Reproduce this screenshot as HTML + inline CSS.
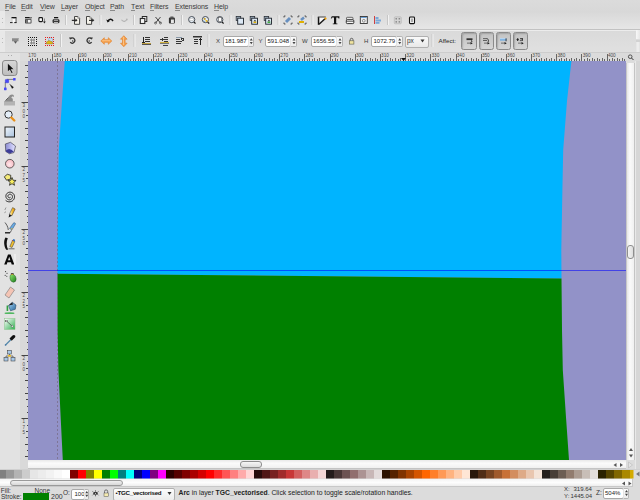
<!DOCTYPE html><html><head><meta charset="utf-8"><style>

*{box-sizing:border-box}
html,body{margin:0;padding:0}
body{width:640px;height:500px;overflow:hidden;position:relative;background:#dcdcdc;font-family:"Liberation Sans",sans-serif;color:#1a1a1a}
.ab{position:absolute}
.t{position:absolute;white-space:nowrap;font-size:8px;line-height:10px;color:#222}
.mn{position:absolute;white-space:nowrap;font-size:7px;line-height:11px;color:#3a3a3a;letter-spacing:-0.1px}
.mn u{text-decoration:none;display:inline-block;line-height:6.5px;border-bottom:1px solid #8a8a8a;}
svg{position:absolute;overflow:visible}
.rl{position:absolute;font-size:4.7px;line-height:5px;color:#4a4a4a;letter-spacing:0}

</style></head><body>
<div class="ab" style="left:0;top:0;width:640px;height:29px;background:linear-gradient(#dbdbdb,#d8d8d8 40%,#e6e6e6)"></div>
<div class="ab" style="left:0;top:29px;width:640px;height:1px;background:#c2c2c2"></div>
<div class="ab" style="left:0;top:30px;width:640px;height:1px;background:#ececec"></div>
<div class="ab" style="left:0;top:31px;width:640px;height:21px;background:linear-gradient(#dadada,#e0e0e0)"></div>
<div class="ab" style="left:0;top:52px;width:640px;height:1px;background:#cdcdcd"></div>
<div class="ab" style="left:0;top:11px;width:5px;height:18px;background:#e8e8e8"></div>
<div class="ab" style="left:0;top:31px;width:5px;height:21px;background:#e8e8e8"></div>
<div class="ab" style="left:636px;top:30px;width:4px;height:9px;background:linear-gradient(90deg,#f8f8f8,#e6e6e6)"></div><div class="ab" style="left:636px;top:40px;width:4px;height:1.5px;background:#d2d2d2"></div><div class="ab" style="left:636px;top:42px;width:4px;height:10px;background:linear-gradient(90deg,#e4e4e4,#f0f0f0 50%,#e0e0e0)"></div>
<div class="ab" style="left:0;top:53px;width:20px;height:416px;background:#e2e2e2"></div>
<div class="ab" style="left:20px;top:61px;width:8px;height:408px;background:#d9d9d9"></div>
<div class="ab" style="left:28px;top:53px;width:612px;height:8px;background:#dbdbdb"></div>
<span class="mn" style="left:5px;top:0.5px"><u>F</u>ile</span>
<span class="mn" style="left:21px;top:0.5px"><u>E</u>dit</span>
<span class="mn" style="left:40px;top:0.5px"><u>V</u>iew</span>
<span class="mn" style="left:61px;top:0.5px"><u>L</u>ayer</span>
<span class="mn" style="left:85px;top:0.5px"><u>O</u>bject</span>
<span class="mn" style="left:110px;top:0.5px"><u>P</u>ath</span>
<span class="mn" style="left:131px;top:0.5px"><u>T</u>ext</span>
<span class="mn" style="left:150px;top:0.5px"><u>F</u>ilters</span>
<span class="mn" style="left:175px;top:0.5px"><u>E</u>xtensions</span>
<span class="mn" style="left:214px;top:0.5px"><u>H</u>elp</span>
<svg style="left:28px;top:61px" width="598" height="399" viewBox="28 61 598 399">
<rect x="28" y="61" width="598" height="399" fill="#9292c8"/>
<path d="M64.80,61.00 L62.00,101.00 L58.80,150.00 L58.00,190.00 L57.60,230.00 L57.50,272.00 L57.50,273.75 L561.50,278.40 L561.50,278.00 L561.30,250.00 L562.40,190.00 L563.20,150.00 L567.00,101.00 L571.40,61.00 Z" fill="#00b4ff"/>
<path d="M57.50,273.75 L57.60,330.00 L58.40,370.00 L60.80,420.00 L62.80,460.00 L569.00,460.00 L566.20,420.00 L562.80,370.00 L562.00,330.00 L561.50,278.40 Z" fill="#008000"/>
<line x1="57.5" y1="61" x2="57.5" y2="460" stroke="#6e5e70" stroke-width="1" stroke-dasharray="2,2" opacity="0.55"/>
<rect x="28" y="270" width="598" height="1" fill="rgba(0,0,255,0.55)"/>
</svg>
<svg style="left:0;top:0" width="640" height="500">
<line x1="30.5" y1="59" x2="30.5" y2="61" stroke="#666" stroke-width="1"/>
<line x1="32.5" y1="58" x2="32.5" y2="61" stroke="#666" stroke-width="1"/>
<line x1="35.5" y1="59" x2="35.5" y2="61" stroke="#666" stroke-width="1"/>
<line x1="37.5" y1="58" x2="37.5" y2="61" stroke="#666" stroke-width="1"/>
<line x1="40.5" y1="59" x2="40.5" y2="61" stroke="#666" stroke-width="1"/>
<line x1="42.5" y1="58" x2="42.5" y2="61" stroke="#666" stroke-width="1"/>
<line x1="45.5" y1="59" x2="45.5" y2="61" stroke="#666" stroke-width="1"/>
<line x1="47.5" y1="58" x2="47.5" y2="61" stroke="#666" stroke-width="1"/>
<line x1="50.5" y1="59" x2="50.5" y2="61" stroke="#666" stroke-width="1"/>
<line x1="52.5" y1="54" x2="52.5" y2="61" stroke="#666" stroke-width="1"/>
<line x1="55.5" y1="59" x2="55.5" y2="61" stroke="#666" stroke-width="1"/>
<line x1="57.5" y1="58" x2="57.5" y2="61" stroke="#666" stroke-width="1"/>
<line x1="60.5" y1="59" x2="60.5" y2="61" stroke="#666" stroke-width="1"/>
<line x1="62.5" y1="58" x2="62.5" y2="61" stroke="#666" stroke-width="1"/>
<line x1="65.5" y1="59" x2="65.5" y2="61" stroke="#666" stroke-width="1"/>
<line x1="67.5" y1="58" x2="67.5" y2="61" stroke="#666" stroke-width="1"/>
<line x1="70.5" y1="59" x2="70.5" y2="61" stroke="#666" stroke-width="1"/>
<line x1="72.5" y1="58" x2="72.5" y2="61" stroke="#666" stroke-width="1"/>
<line x1="75.5" y1="59" x2="75.5" y2="61" stroke="#666" stroke-width="1"/>
<line x1="78.5" y1="54" x2="78.5" y2="61" stroke="#666" stroke-width="1"/>
<line x1="80.5" y1="59" x2="80.5" y2="61" stroke="#666" stroke-width="1"/>
<line x1="83.5" y1="58" x2="83.5" y2="61" stroke="#666" stroke-width="1"/>
<line x1="85.5" y1="59" x2="85.5" y2="61" stroke="#666" stroke-width="1"/>
<line x1="88.5" y1="58" x2="88.5" y2="61" stroke="#666" stroke-width="1"/>
<line x1="90.5" y1="59" x2="90.5" y2="61" stroke="#666" stroke-width="1"/>
<line x1="93.5" y1="58" x2="93.5" y2="61" stroke="#666" stroke-width="1"/>
<line x1="95.5" y1="59" x2="95.5" y2="61" stroke="#666" stroke-width="1"/>
<line x1="98.5" y1="58" x2="98.5" y2="61" stroke="#666" stroke-width="1"/>
<line x1="100.5" y1="59" x2="100.5" y2="61" stroke="#666" stroke-width="1"/>
<line x1="103.5" y1="54" x2="103.5" y2="61" stroke="#666" stroke-width="1"/>
<line x1="105.5" y1="59" x2="105.5" y2="61" stroke="#666" stroke-width="1"/>
<line x1="108.5" y1="58" x2="108.5" y2="61" stroke="#666" stroke-width="1"/>
<line x1="110.5" y1="59" x2="110.5" y2="61" stroke="#666" stroke-width="1"/>
<line x1="113.5" y1="58" x2="113.5" y2="61" stroke="#666" stroke-width="1"/>
<line x1="115.5" y1="59" x2="115.5" y2="61" stroke="#666" stroke-width="1"/>
<line x1="118.5" y1="58" x2="118.5" y2="61" stroke="#666" stroke-width="1"/>
<line x1="120.5" y1="59" x2="120.5" y2="61" stroke="#666" stroke-width="1"/>
<line x1="123.5" y1="58" x2="123.5" y2="61" stroke="#666" stroke-width="1"/>
<line x1="125.5" y1="59" x2="125.5" y2="61" stroke="#666" stroke-width="1"/>
<line x1="128.5" y1="54" x2="128.5" y2="61" stroke="#666" stroke-width="1"/>
<line x1="130.5" y1="59" x2="130.5" y2="61" stroke="#666" stroke-width="1"/>
<line x1="133.5" y1="58" x2="133.5" y2="61" stroke="#666" stroke-width="1"/>
<line x1="135.5" y1="59" x2="135.5" y2="61" stroke="#666" stroke-width="1"/>
<line x1="138.5" y1="58" x2="138.5" y2="61" stroke="#666" stroke-width="1"/>
<line x1="140.5" y1="59" x2="140.5" y2="61" stroke="#666" stroke-width="1"/>
<line x1="143.5" y1="58" x2="143.5" y2="61" stroke="#666" stroke-width="1"/>
<line x1="146.5" y1="59" x2="146.5" y2="61" stroke="#666" stroke-width="1"/>
<line x1="148.5" y1="58" x2="148.5" y2="61" stroke="#666" stroke-width="1"/>
<line x1="151.5" y1="59" x2="151.5" y2="61" stroke="#666" stroke-width="1"/>
<line x1="153.5" y1="54" x2="153.5" y2="61" stroke="#666" stroke-width="1"/>
<line x1="156.5" y1="59" x2="156.5" y2="61" stroke="#666" stroke-width="1"/>
<line x1="158.5" y1="58" x2="158.5" y2="61" stroke="#666" stroke-width="1"/>
<line x1="161.5" y1="59" x2="161.5" y2="61" stroke="#666" stroke-width="1"/>
<line x1="163.5" y1="58" x2="163.5" y2="61" stroke="#666" stroke-width="1"/>
<line x1="166.5" y1="59" x2="166.5" y2="61" stroke="#666" stroke-width="1"/>
<line x1="168.5" y1="58" x2="168.5" y2="61" stroke="#666" stroke-width="1"/>
<line x1="171.5" y1="59" x2="171.5" y2="61" stroke="#666" stroke-width="1"/>
<line x1="173.5" y1="58" x2="173.5" y2="61" stroke="#666" stroke-width="1"/>
<line x1="176.5" y1="59" x2="176.5" y2="61" stroke="#666" stroke-width="1"/>
<line x1="178.5" y1="54" x2="178.5" y2="61" stroke="#666" stroke-width="1"/>
<line x1="181.5" y1="59" x2="181.5" y2="61" stroke="#666" stroke-width="1"/>
<line x1="183.5" y1="58" x2="183.5" y2="61" stroke="#666" stroke-width="1"/>
<line x1="186.5" y1="59" x2="186.5" y2="61" stroke="#666" stroke-width="1"/>
<line x1="188.5" y1="58" x2="188.5" y2="61" stroke="#666" stroke-width="1"/>
<line x1="191.5" y1="59" x2="191.5" y2="61" stroke="#666" stroke-width="1"/>
<line x1="193.5" y1="58" x2="193.5" y2="61" stroke="#666" stroke-width="1"/>
<line x1="196.5" y1="59" x2="196.5" y2="61" stroke="#666" stroke-width="1"/>
<line x1="198.5" y1="58" x2="198.5" y2="61" stroke="#666" stroke-width="1"/>
<line x1="201.5" y1="59" x2="201.5" y2="61" stroke="#666" stroke-width="1"/>
<line x1="204.5" y1="54" x2="204.5" y2="61" stroke="#666" stroke-width="1"/>
<line x1="206.5" y1="59" x2="206.5" y2="61" stroke="#666" stroke-width="1"/>
<line x1="209.5" y1="58" x2="209.5" y2="61" stroke="#666" stroke-width="1"/>
<line x1="211.5" y1="59" x2="211.5" y2="61" stroke="#666" stroke-width="1"/>
<line x1="214.5" y1="58" x2="214.5" y2="61" stroke="#666" stroke-width="1"/>
<line x1="216.5" y1="59" x2="216.5" y2="61" stroke="#666" stroke-width="1"/>
<line x1="219.5" y1="58" x2="219.5" y2="61" stroke="#666" stroke-width="1"/>
<line x1="221.5" y1="59" x2="221.5" y2="61" stroke="#666" stroke-width="1"/>
<line x1="224.5" y1="58" x2="224.5" y2="61" stroke="#666" stroke-width="1"/>
<line x1="226.5" y1="59" x2="226.5" y2="61" stroke="#666" stroke-width="1"/>
<line x1="229.5" y1="54" x2="229.5" y2="61" stroke="#666" stroke-width="1"/>
<line x1="231.5" y1="59" x2="231.5" y2="61" stroke="#666" stroke-width="1"/>
<line x1="234.5" y1="58" x2="234.5" y2="61" stroke="#666" stroke-width="1"/>
<line x1="236.5" y1="59" x2="236.5" y2="61" stroke="#666" stroke-width="1"/>
<line x1="239.5" y1="58" x2="239.5" y2="61" stroke="#666" stroke-width="1"/>
<line x1="241.5" y1="59" x2="241.5" y2="61" stroke="#666" stroke-width="1"/>
<line x1="244.5" y1="58" x2="244.5" y2="61" stroke="#666" stroke-width="1"/>
<line x1="246.5" y1="59" x2="246.5" y2="61" stroke="#666" stroke-width="1"/>
<line x1="249.5" y1="58" x2="249.5" y2="61" stroke="#666" stroke-width="1"/>
<line x1="251.5" y1="59" x2="251.5" y2="61" stroke="#666" stroke-width="1"/>
<line x1="254.5" y1="54" x2="254.5" y2="61" stroke="#666" stroke-width="1"/>
<line x1="256.5" y1="59" x2="256.5" y2="61" stroke="#666" stroke-width="1"/>
<line x1="259.5" y1="58" x2="259.5" y2="61" stroke="#666" stroke-width="1"/>
<line x1="261.5" y1="59" x2="261.5" y2="61" stroke="#666" stroke-width="1"/>
<line x1="264.5" y1="58" x2="264.5" y2="61" stroke="#666" stroke-width="1"/>
<line x1="266.5" y1="59" x2="266.5" y2="61" stroke="#666" stroke-width="1"/>
<line x1="269.5" y1="58" x2="269.5" y2="61" stroke="#666" stroke-width="1"/>
<line x1="272.5" y1="59" x2="272.5" y2="61" stroke="#666" stroke-width="1"/>
<line x1="274.5" y1="58" x2="274.5" y2="61" stroke="#666" stroke-width="1"/>
<line x1="277.5" y1="59" x2="277.5" y2="61" stroke="#666" stroke-width="1"/>
<line x1="279.5" y1="54" x2="279.5" y2="61" stroke="#666" stroke-width="1"/>
<line x1="282.5" y1="59" x2="282.5" y2="61" stroke="#666" stroke-width="1"/>
<line x1="284.5" y1="58" x2="284.5" y2="61" stroke="#666" stroke-width="1"/>
<line x1="287.5" y1="59" x2="287.5" y2="61" stroke="#666" stroke-width="1"/>
<line x1="289.5" y1="58" x2="289.5" y2="61" stroke="#666" stroke-width="1"/>
<line x1="292.5" y1="59" x2="292.5" y2="61" stroke="#666" stroke-width="1"/>
<line x1="294.5" y1="58" x2="294.5" y2="61" stroke="#666" stroke-width="1"/>
<line x1="297.5" y1="59" x2="297.5" y2="61" stroke="#666" stroke-width="1"/>
<line x1="299.5" y1="58" x2="299.5" y2="61" stroke="#666" stroke-width="1"/>
<line x1="302.5" y1="59" x2="302.5" y2="61" stroke="#666" stroke-width="1"/>
<line x1="304.5" y1="54" x2="304.5" y2="61" stroke="#666" stroke-width="1"/>
<line x1="307.5" y1="59" x2="307.5" y2="61" stroke="#666" stroke-width="1"/>
<line x1="309.5" y1="58" x2="309.5" y2="61" stroke="#666" stroke-width="1"/>
<line x1="312.5" y1="59" x2="312.5" y2="61" stroke="#666" stroke-width="1"/>
<line x1="314.5" y1="58" x2="314.5" y2="61" stroke="#666" stroke-width="1"/>
<line x1="317.5" y1="59" x2="317.5" y2="61" stroke="#666" stroke-width="1"/>
<line x1="319.5" y1="58" x2="319.5" y2="61" stroke="#666" stroke-width="1"/>
<line x1="322.5" y1="59" x2="322.5" y2="61" stroke="#666" stroke-width="1"/>
<line x1="324.5" y1="58" x2="324.5" y2="61" stroke="#666" stroke-width="1"/>
<line x1="327.5" y1="59" x2="327.5" y2="61" stroke="#666" stroke-width="1"/>
<line x1="330.5" y1="54" x2="330.5" y2="61" stroke="#666" stroke-width="1"/>
<line x1="332.5" y1="59" x2="332.5" y2="61" stroke="#666" stroke-width="1"/>
<line x1="335.5" y1="58" x2="335.5" y2="61" stroke="#666" stroke-width="1"/>
<line x1="337.5" y1="59" x2="337.5" y2="61" stroke="#666" stroke-width="1"/>
<line x1="340.5" y1="58" x2="340.5" y2="61" stroke="#666" stroke-width="1"/>
<line x1="342.5" y1="59" x2="342.5" y2="61" stroke="#666" stroke-width="1"/>
<line x1="345.5" y1="58" x2="345.5" y2="61" stroke="#666" stroke-width="1"/>
<line x1="347.5" y1="59" x2="347.5" y2="61" stroke="#666" stroke-width="1"/>
<line x1="350.5" y1="58" x2="350.5" y2="61" stroke="#666" stroke-width="1"/>
<line x1="352.5" y1="59" x2="352.5" y2="61" stroke="#666" stroke-width="1"/>
<line x1="355.5" y1="54" x2="355.5" y2="61" stroke="#666" stroke-width="1"/>
<line x1="357.5" y1="59" x2="357.5" y2="61" stroke="#666" stroke-width="1"/>
<line x1="360.5" y1="58" x2="360.5" y2="61" stroke="#666" stroke-width="1"/>
<line x1="362.5" y1="59" x2="362.5" y2="61" stroke="#666" stroke-width="1"/>
<line x1="365.5" y1="58" x2="365.5" y2="61" stroke="#666" stroke-width="1"/>
<line x1="367.5" y1="59" x2="367.5" y2="61" stroke="#666" stroke-width="1"/>
<line x1="370.5" y1="58" x2="370.5" y2="61" stroke="#666" stroke-width="1"/>
<line x1="372.5" y1="59" x2="372.5" y2="61" stroke="#666" stroke-width="1"/>
<line x1="375.5" y1="58" x2="375.5" y2="61" stroke="#666" stroke-width="1"/>
<line x1="377.5" y1="59" x2="377.5" y2="61" stroke="#666" stroke-width="1"/>
<line x1="380.5" y1="54" x2="380.5" y2="61" stroke="#666" stroke-width="1"/>
<line x1="382.5" y1="59" x2="382.5" y2="61" stroke="#666" stroke-width="1"/>
<line x1="385.5" y1="58" x2="385.5" y2="61" stroke="#666" stroke-width="1"/>
<line x1="387.5" y1="59" x2="387.5" y2="61" stroke="#666" stroke-width="1"/>
<line x1="390.5" y1="58" x2="390.5" y2="61" stroke="#666" stroke-width="1"/>
<line x1="392.5" y1="59" x2="392.5" y2="61" stroke="#666" stroke-width="1"/>
<line x1="395.5" y1="58" x2="395.5" y2="61" stroke="#666" stroke-width="1"/>
<line x1="398.5" y1="59" x2="398.5" y2="61" stroke="#666" stroke-width="1"/>
<line x1="400.5" y1="58" x2="400.5" y2="61" stroke="#666" stroke-width="1"/>
<line x1="403.5" y1="59" x2="403.5" y2="61" stroke="#666" stroke-width="1"/>
<line x1="405.5" y1="54" x2="405.5" y2="61" stroke="#666" stroke-width="1"/>
<line x1="408.5" y1="59" x2="408.5" y2="61" stroke="#666" stroke-width="1"/>
<line x1="410.5" y1="58" x2="410.5" y2="61" stroke="#666" stroke-width="1"/>
<line x1="413.5" y1="59" x2="413.5" y2="61" stroke="#666" stroke-width="1"/>
<line x1="415.5" y1="58" x2="415.5" y2="61" stroke="#666" stroke-width="1"/>
<line x1="418.5" y1="59" x2="418.5" y2="61" stroke="#666" stroke-width="1"/>
<line x1="420.5" y1="58" x2="420.5" y2="61" stroke="#666" stroke-width="1"/>
<line x1="423.5" y1="59" x2="423.5" y2="61" stroke="#666" stroke-width="1"/>
<line x1="425.5" y1="58" x2="425.5" y2="61" stroke="#666" stroke-width="1"/>
<line x1="428.5" y1="59" x2="428.5" y2="61" stroke="#666" stroke-width="1"/>
<line x1="430.5" y1="54" x2="430.5" y2="61" stroke="#666" stroke-width="1"/>
<line x1="433.5" y1="59" x2="433.5" y2="61" stroke="#666" stroke-width="1"/>
<line x1="435.5" y1="58" x2="435.5" y2="61" stroke="#666" stroke-width="1"/>
<line x1="438.5" y1="59" x2="438.5" y2="61" stroke="#666" stroke-width="1"/>
<line x1="440.5" y1="58" x2="440.5" y2="61" stroke="#666" stroke-width="1"/>
<line x1="443.5" y1="59" x2="443.5" y2="61" stroke="#666" stroke-width="1"/>
<line x1="445.5" y1="58" x2="445.5" y2="61" stroke="#666" stroke-width="1"/>
<line x1="448.5" y1="59" x2="448.5" y2="61" stroke="#666" stroke-width="1"/>
<line x1="450.5" y1="58" x2="450.5" y2="61" stroke="#666" stroke-width="1"/>
<line x1="453.5" y1="59" x2="453.5" y2="61" stroke="#666" stroke-width="1"/>
<line x1="456.5" y1="54" x2="456.5" y2="61" stroke="#666" stroke-width="1"/>
<line x1="458.5" y1="59" x2="458.5" y2="61" stroke="#666" stroke-width="1"/>
<line x1="461.5" y1="58" x2="461.5" y2="61" stroke="#666" stroke-width="1"/>
<line x1="463.5" y1="59" x2="463.5" y2="61" stroke="#666" stroke-width="1"/>
<line x1="466.5" y1="58" x2="466.5" y2="61" stroke="#666" stroke-width="1"/>
<line x1="468.5" y1="59" x2="468.5" y2="61" stroke="#666" stroke-width="1"/>
<line x1="471.5" y1="58" x2="471.5" y2="61" stroke="#666" stroke-width="1"/>
<line x1="473.5" y1="59" x2="473.5" y2="61" stroke="#666" stroke-width="1"/>
<line x1="476.5" y1="58" x2="476.5" y2="61" stroke="#666" stroke-width="1"/>
<line x1="478.5" y1="59" x2="478.5" y2="61" stroke="#666" stroke-width="1"/>
<line x1="481.5" y1="54" x2="481.5" y2="61" stroke="#666" stroke-width="1"/>
<line x1="483.5" y1="59" x2="483.5" y2="61" stroke="#666" stroke-width="1"/>
<line x1="486.5" y1="58" x2="486.5" y2="61" stroke="#666" stroke-width="1"/>
<line x1="488.5" y1="59" x2="488.5" y2="61" stroke="#666" stroke-width="1"/>
<line x1="491.5" y1="58" x2="491.5" y2="61" stroke="#666" stroke-width="1"/>
<line x1="493.5" y1="59" x2="493.5" y2="61" stroke="#666" stroke-width="1"/>
<line x1="496.5" y1="58" x2="496.5" y2="61" stroke="#666" stroke-width="1"/>
<line x1="498.5" y1="59" x2="498.5" y2="61" stroke="#666" stroke-width="1"/>
<line x1="501.5" y1="58" x2="501.5" y2="61" stroke="#666" stroke-width="1"/>
<line x1="503.5" y1="59" x2="503.5" y2="61" stroke="#666" stroke-width="1"/>
<line x1="506.5" y1="54" x2="506.5" y2="61" stroke="#666" stroke-width="1"/>
<line x1="508.5" y1="59" x2="508.5" y2="61" stroke="#666" stroke-width="1"/>
<line x1="511.5" y1="58" x2="511.5" y2="61" stroke="#666" stroke-width="1"/>
<line x1="513.5" y1="59" x2="513.5" y2="61" stroke="#666" stroke-width="1"/>
<line x1="516.5" y1="58" x2="516.5" y2="61" stroke="#666" stroke-width="1"/>
<line x1="518.5" y1="59" x2="518.5" y2="61" stroke="#666" stroke-width="1"/>
<line x1="521.5" y1="58" x2="521.5" y2="61" stroke="#666" stroke-width="1"/>
<line x1="524.5" y1="59" x2="524.5" y2="61" stroke="#666" stroke-width="1"/>
<line x1="526.5" y1="58" x2="526.5" y2="61" stroke="#666" stroke-width="1"/>
<line x1="529.5" y1="59" x2="529.5" y2="61" stroke="#666" stroke-width="1"/>
<line x1="531.5" y1="54" x2="531.5" y2="61" stroke="#666" stroke-width="1"/>
<line x1="534.5" y1="59" x2="534.5" y2="61" stroke="#666" stroke-width="1"/>
<line x1="536.5" y1="58" x2="536.5" y2="61" stroke="#666" stroke-width="1"/>
<line x1="539.5" y1="59" x2="539.5" y2="61" stroke="#666" stroke-width="1"/>
<line x1="541.5" y1="58" x2="541.5" y2="61" stroke="#666" stroke-width="1"/>
<line x1="544.5" y1="59" x2="544.5" y2="61" stroke="#666" stroke-width="1"/>
<line x1="546.5" y1="58" x2="546.5" y2="61" stroke="#666" stroke-width="1"/>
<line x1="549.5" y1="59" x2="549.5" y2="61" stroke="#666" stroke-width="1"/>
<line x1="551.5" y1="58" x2="551.5" y2="61" stroke="#666" stroke-width="1"/>
<line x1="554.5" y1="59" x2="554.5" y2="61" stroke="#666" stroke-width="1"/>
<line x1="556.5" y1="54" x2="556.5" y2="61" stroke="#666" stroke-width="1"/>
<line x1="559.5" y1="59" x2="559.5" y2="61" stroke="#666" stroke-width="1"/>
<line x1="561.5" y1="58" x2="561.5" y2="61" stroke="#666" stroke-width="1"/>
<line x1="564.5" y1="59" x2="564.5" y2="61" stroke="#666" stroke-width="1"/>
<line x1="566.5" y1="58" x2="566.5" y2="61" stroke="#666" stroke-width="1"/>
<line x1="569.5" y1="59" x2="569.5" y2="61" stroke="#666" stroke-width="1"/>
<line x1="571.5" y1="58" x2="571.5" y2="61" stroke="#666" stroke-width="1"/>
<line x1="574.5" y1="59" x2="574.5" y2="61" stroke="#666" stroke-width="1"/>
<line x1="576.5" y1="58" x2="576.5" y2="61" stroke="#666" stroke-width="1"/>
<line x1="579.5" y1="59" x2="579.5" y2="61" stroke="#666" stroke-width="1"/>
<line x1="581.5" y1="54" x2="581.5" y2="61" stroke="#666" stroke-width="1"/>
<line x1="584.5" y1="59" x2="584.5" y2="61" stroke="#666" stroke-width="1"/>
<line x1="587.5" y1="58" x2="587.5" y2="61" stroke="#666" stroke-width="1"/>
<line x1="589.5" y1="59" x2="589.5" y2="61" stroke="#666" stroke-width="1"/>
<line x1="592.5" y1="58" x2="592.5" y2="61" stroke="#666" stroke-width="1"/>
<line x1="594.5" y1="59" x2="594.5" y2="61" stroke="#666" stroke-width="1"/>
<line x1="597.5" y1="58" x2="597.5" y2="61" stroke="#666" stroke-width="1"/>
<line x1="599.5" y1="59" x2="599.5" y2="61" stroke="#666" stroke-width="1"/>
<line x1="602.5" y1="58" x2="602.5" y2="61" stroke="#666" stroke-width="1"/>
<line x1="604.5" y1="59" x2="604.5" y2="61" stroke="#666" stroke-width="1"/>
<line x1="607.5" y1="54" x2="607.5" y2="61" stroke="#666" stroke-width="1"/>
<line x1="609.5" y1="59" x2="609.5" y2="61" stroke="#666" stroke-width="1"/>
<line x1="612.5" y1="58" x2="612.5" y2="61" stroke="#666" stroke-width="1"/>
<line x1="614.5" y1="59" x2="614.5" y2="61" stroke="#666" stroke-width="1"/>
<line x1="617.5" y1="58" x2="617.5" y2="61" stroke="#666" stroke-width="1"/>
<line x1="619.5" y1="59" x2="619.5" y2="61" stroke="#666" stroke-width="1"/>
<line x1="622.5" y1="58" x2="622.5" y2="61" stroke="#666" stroke-width="1"/>
<line x1="624.5" y1="59" x2="624.5" y2="61" stroke="#666" stroke-width="1"/>
<line x1="25" y1="65.5" x2="28" y2="65.5" stroke="#444" stroke-width="1"/>
<line x1="27" y1="71.5" x2="28" y2="71.5" stroke="#444" stroke-width="1"/>
<line x1="25" y1="77.5" x2="28" y2="77.5" stroke="#444" stroke-width="1"/>
<line x1="26" y1="84.5" x2="28" y2="84.5" stroke="#444" stroke-width="1"/>
<line x1="27" y1="90.5" x2="28" y2="90.5" stroke="#444" stroke-width="1"/>
<line x1="27" y1="96.5" x2="28" y2="96.5" stroke="#444" stroke-width="1"/>
<line x1="21.5" y1="102.5" x2="28" y2="102.5" stroke="#444" stroke-width="1"/>
<line x1="27" y1="109.5" x2="28" y2="109.5" stroke="#444" stroke-width="1"/>
<line x1="26" y1="115.5" x2="28" y2="115.5" stroke="#444" stroke-width="1"/>
<line x1="26" y1="121.5" x2="28" y2="121.5" stroke="#444" stroke-width="1"/>
<line x1="25" y1="128.5" x2="28" y2="128.5" stroke="#444" stroke-width="1"/>
<line x1="27" y1="134.5" x2="28" y2="134.5" stroke="#444" stroke-width="1"/>
<line x1="25" y1="140.5" x2="28" y2="140.5" stroke="#444" stroke-width="1"/>
<line x1="26" y1="147.5" x2="28" y2="147.5" stroke="#444" stroke-width="1"/>
<line x1="27" y1="153.5" x2="28" y2="153.5" stroke="#444" stroke-width="1"/>
<line x1="27" y1="159.5" x2="28" y2="159.5" stroke="#444" stroke-width="1"/>
<line x1="21.5" y1="166.5" x2="28" y2="166.5" stroke="#444" stroke-width="1"/>
<line x1="27" y1="172.5" x2="28" y2="172.5" stroke="#444" stroke-width="1"/>
<line x1="26" y1="178.5" x2="28" y2="178.5" stroke="#444" stroke-width="1"/>
<line x1="26" y1="185.5" x2="28" y2="185.5" stroke="#444" stroke-width="1"/>
<line x1="25" y1="191.5" x2="28" y2="191.5" stroke="#444" stroke-width="1"/>
<line x1="27" y1="197.5" x2="28" y2="197.5" stroke="#444" stroke-width="1"/>
<line x1="25" y1="204.5" x2="28" y2="204.5" stroke="#444" stroke-width="1"/>
<line x1="26" y1="210.5" x2="28" y2="210.5" stroke="#444" stroke-width="1"/>
<line x1="27" y1="216.5" x2="28" y2="216.5" stroke="#444" stroke-width="1"/>
<line x1="27" y1="222.5" x2="28" y2="222.5" stroke="#444" stroke-width="1"/>
<line x1="21.5" y1="229.5" x2="28" y2="229.5" stroke="#444" stroke-width="1"/>
<line x1="27" y1="235.5" x2="28" y2="235.5" stroke="#444" stroke-width="1"/>
<line x1="26" y1="241.5" x2="28" y2="241.5" stroke="#444" stroke-width="1"/>
<line x1="26" y1="248.5" x2="28" y2="248.5" stroke="#444" stroke-width="1"/>
<line x1="25" y1="254.5" x2="28" y2="254.5" stroke="#444" stroke-width="1"/>
<line x1="27" y1="260.5" x2="28" y2="260.5" stroke="#444" stroke-width="1"/>
<line x1="25" y1="267.5" x2="28" y2="267.5" stroke="#444" stroke-width="1"/>
<line x1="26" y1="273.5" x2="28" y2="273.5" stroke="#444" stroke-width="1"/>
<line x1="27" y1="279.5" x2="28" y2="279.5" stroke="#444" stroke-width="1"/>
<line x1="27" y1="286.5" x2="28" y2="286.5" stroke="#444" stroke-width="1"/>
<line x1="21.5" y1="292.5" x2="28" y2="292.5" stroke="#444" stroke-width="1"/>
<line x1="27" y1="298.5" x2="28" y2="298.5" stroke="#444" stroke-width="1"/>
<line x1="26" y1="305.5" x2="28" y2="305.5" stroke="#444" stroke-width="1"/>
<line x1="26" y1="311.5" x2="28" y2="311.5" stroke="#444" stroke-width="1"/>
<line x1="25" y1="317.5" x2="28" y2="317.5" stroke="#444" stroke-width="1"/>
<line x1="27" y1="324.5" x2="28" y2="324.5" stroke="#444" stroke-width="1"/>
<line x1="25" y1="330.5" x2="28" y2="330.5" stroke="#444" stroke-width="1"/>
<line x1="26" y1="336.5" x2="28" y2="336.5" stroke="#444" stroke-width="1"/>
<line x1="27" y1="342.5" x2="28" y2="342.5" stroke="#444" stroke-width="1"/>
<line x1="27" y1="349.5" x2="28" y2="349.5" stroke="#444" stroke-width="1"/>
<line x1="21.5" y1="355.5" x2="28" y2="355.5" stroke="#444" stroke-width="1"/>
<line x1="27" y1="361.5" x2="28" y2="361.5" stroke="#444" stroke-width="1"/>
<line x1="26" y1="368.5" x2="28" y2="368.5" stroke="#444" stroke-width="1"/>
<line x1="26" y1="374.5" x2="28" y2="374.5" stroke="#444" stroke-width="1"/>
<line x1="25" y1="380.5" x2="28" y2="380.5" stroke="#444" stroke-width="1"/>
<line x1="27" y1="387.5" x2="28" y2="387.5" stroke="#444" stroke-width="1"/>
<line x1="25" y1="393.5" x2="28" y2="393.5" stroke="#444" stroke-width="1"/>
<line x1="26" y1="399.5" x2="28" y2="399.5" stroke="#444" stroke-width="1"/>
<line x1="27" y1="406.5" x2="28" y2="406.5" stroke="#444" stroke-width="1"/>
<line x1="27" y1="412.5" x2="28" y2="412.5" stroke="#444" stroke-width="1"/>
<line x1="21.5" y1="418.5" x2="28" y2="418.5" stroke="#444" stroke-width="1"/>
<line x1="27" y1="425.5" x2="28" y2="425.5" stroke="#444" stroke-width="1"/>
<line x1="26" y1="431.5" x2="28" y2="431.5" stroke="#444" stroke-width="1"/>
<line x1="26" y1="437.5" x2="28" y2="437.5" stroke="#444" stroke-width="1"/>
<line x1="25" y1="444.5" x2="28" y2="444.5" stroke="#444" stroke-width="1"/>
<line x1="27" y1="450.5" x2="28" y2="450.5" stroke="#444" stroke-width="1"/>
<line x1="25" y1="456.5" x2="28" y2="456.5" stroke="#444" stroke-width="1"/>
</svg>
<span class="rl" style="left:28.3px;top:53px">170</span>
<span class="rl" style="left:53.5px;top:53px">180</span>
<span class="rl" style="left:78.7px;top:53px">190</span>
<span class="rl" style="left:103.9px;top:53px">200</span>
<span class="rl" style="left:129.1px;top:53px">210</span>
<span class="rl" style="left:154.3px;top:53px">220</span>
<span class="rl" style="left:179.5px;top:53px">230</span>
<span class="rl" style="left:204.7px;top:53px">240</span>
<span class="rl" style="left:229.9px;top:53px">250</span>
<span class="rl" style="left:255.1px;top:53px">260</span>
<span class="rl" style="left:280.3px;top:53px">270</span>
<span class="rl" style="left:305.5px;top:53px">280</span>
<span class="rl" style="left:330.7px;top:53px">290</span>
<span class="rl" style="left:355.9px;top:53px">300</span>
<span class="rl" style="left:381.1px;top:53px">310</span>
<span class="rl" style="left:406.3px;top:53px">320</span>
<span class="rl" style="left:431.5px;top:53px">330</span>
<span class="rl" style="left:456.7px;top:53px">340</span>
<span class="rl" style="left:481.9px;top:53px">350</span>
<span class="rl" style="left:507.1px;top:53px">360</span>
<span class="rl" style="left:532.3px;top:53px">370</span>
<span class="rl" style="left:557.5px;top:53px">380</span>
<span class="rl" style="left:582.7px;top:53px">390</span>
<span class="rl" style="left:607.9px;top:53px">400</span>
<span class="rl" style="left:21.3px;top:103.3px;writing-mode:vertical-lr;text-orientation:upright;font-size:4.5px;line-height:4px;letter-spacing:0.6px">300</span>
<span class="rl" style="left:21.3px;top:166.5px;writing-mode:vertical-lr;text-orientation:upright;font-size:4.5px;line-height:4px;letter-spacing:0.6px">275</span>
<span class="rl" style="left:21.3px;top:229.6px;writing-mode:vertical-lr;text-orientation:upright;font-size:4.5px;line-height:4px;letter-spacing:0.6px">250</span>
<span class="rl" style="left:21.3px;top:292.8px;writing-mode:vertical-lr;text-orientation:upright;font-size:4.5px;line-height:4px;letter-spacing:0.6px">225</span>
<span class="rl" style="left:21.3px;top:355.9px;writing-mode:vertical-lr;text-orientation:upright;font-size:4.5px;line-height:4px;letter-spacing:0.6px">200</span>
<span class="rl" style="left:21.3px;top:419.1px;writing-mode:vertical-lr;text-orientation:upright;font-size:4.5px;line-height:4px;letter-spacing:0.6px">175</span>
<svg style="left:0;top:0" width="640" height="500">
<g><rect x="12" y="17.5" width="4" height="5" fill="#fafafa"/><rect x="11.5" y="17" width="5" height="1.4" fill="#111"/><rect x="15.5" y="18" width="1.1" height="5" fill="#666"/><rect x="11.6" y="18" width="0.9" height="4" fill="#c4c4c4"/><rect x="10" y="22" width="2.6" height="1.1" fill="#333"/><rect x="14.3" y="22" width="2.2" height="1.1" fill="#222"/><rect x="25" y="17" width="6.5" height="1.3" fill="#151515"/><rect x="29.5" y="17" width="2" height="1.3" fill="#777"/><rect x="25" y="19" width="6.5" height="4.5" rx="0.8" fill="#444"/><rect x="27.8" y="19.8" width="2.8" height="2.8" fill="#f4f4f4"/><rect x="26" y="19.5" width="1.5" height="3.5" fill="#777"/><rect x="38.9" y="17.6" width="3.6" height="4" rx="0.8" fill="#eee" stroke="#181818" stroke-width="1.1"/><rect x="39.8" y="18.8" width="1.6" height="1.6" fill="#fff"/><rect x="44" y="18.5" width="0.8" height="3.5" fill="#777"/><path d="M43,21.5h2.8l-1.4,2z" fill="#222"/><rect x="54" y="17" width="4.2" height="1.3" fill="#111"/><rect x="52.5" y="19" width="7" height="4.3" rx="1.5" fill="#3a3a3a"/><rect x="54" y="19.6" width="4" height="1.3" fill="#aaa"/><rect x="54" y="22" width="4" height="0.8" fill="#ddd"/><path d="M74.5,16.5h3.3l1.8,1.8v6h-5.1z" fill="#f4f2ea" stroke="#333" stroke-width="0.9"/><path d="M77.8,16.5v1.8h1.8" fill="#ddd" stroke="#555" stroke-width="0.5"/><rect x="71.8" y="19.8" width="4.5" height="1.1" fill="#222"/><path d="M75.5,18.6l2,1.75l-2,1.75z" fill="#222"/><path d="M86.5,16.5h3.3l1.8,1.8v6h-5.1z" fill="#f4f2ea" stroke="#333" stroke-width="0.9"/><path d="M89.8,16.5v1.8h1.8" fill="#ddd" stroke="#555" stroke-width="0.5"/><rect x="89" y="19.8" width="4" height="1.1" fill="#222"/><path d="M92.3,18.6l2,1.75l-2,1.75z" fill="#222"/><path d="M108,21.2C109,18.8 111.5,18.5 113,21" stroke="#151515" stroke-width="1.5" fill="none"/><path d="M106.3,19.5l1.2,3l2.4,-1.5z" fill="#151515"/><path d="M121.5,19.8C123,22 125.5,21.8 126.8,19.5" stroke="#b0b0b0" stroke-width="1.1" fill="none"/><path d="M125.8,18.8l1.8,0l-0.3,1.8z" fill="#a8a8a8"/></g>
<line x1="65.5" y1="15" x2="65.5" y2="25" stroke="#c6c6c6" stroke-width="1"/><line x1="66.5" y1="15" x2="66.5" y2="25" stroke="#f2f2f2" stroke-width="1"/>
<line x1="100" y1="15" x2="100" y2="25" stroke="#c6c6c6" stroke-width="1"/><line x1="101" y1="15" x2="101" y2="25" stroke="#f2f2f2" stroke-width="1"/>
<line x1="133.5" y1="15" x2="133.5" y2="25" stroke="#c6c6c6" stroke-width="1"/><line x1="134.5" y1="15" x2="134.5" y2="25" stroke="#f2f2f2" stroke-width="1"/>
<line x1="181.5" y1="15" x2="181.5" y2="25" stroke="#c6c6c6" stroke-width="1"/><line x1="182.5" y1="15" x2="182.5" y2="25" stroke="#f2f2f2" stroke-width="1"/>
<line x1="230" y1="15" x2="230" y2="25" stroke="#c6c6c6" stroke-width="1"/><line x1="231" y1="15" x2="231" y2="25" stroke="#f2f2f2" stroke-width="1"/>
<line x1="278" y1="15" x2="278" y2="25" stroke="#c6c6c6" stroke-width="1"/><line x1="279" y1="15" x2="279" y2="25" stroke="#f2f2f2" stroke-width="1"/>
<line x1="312" y1="15" x2="312" y2="25" stroke="#c6c6c6" stroke-width="1"/><line x1="313" y1="15" x2="313" y2="25" stroke="#f2f2f2" stroke-width="1"/>
<line x1="387.5" y1="15" x2="387.5" y2="25" stroke="#c6c6c6" stroke-width="1"/><line x1="388.5" y1="15" x2="388.5" y2="25" stroke="#f2f2f2" stroke-width="1"/>
<line x1="60.5" y1="34" x2="60.5" y2="47" stroke="#c6c6c6" stroke-width="1"/><line x1="61.5" y1="34" x2="61.5" y2="47" stroke="#f2f2f2" stroke-width="1"/>
<line x1="134" y1="34" x2="134" y2="47" stroke="#c6c6c6" stroke-width="1"/><line x1="135" y1="34" x2="135" y2="47" stroke="#f2f2f2" stroke-width="1"/>
<line x1="208" y1="34" x2="208" y2="47" stroke="#c6c6c6" stroke-width="1"/><line x1="209" y1="34" x2="209" y2="47" stroke="#f2f2f2" stroke-width="1"/>
<line x1="432" y1="34" x2="432" y2="47" stroke="#c6c6c6" stroke-width="1"/><line x1="433" y1="34" x2="433" y2="47" stroke="#f2f2f2" stroke-width="1"/>
<g transform="translate(143.8,20)"><rect x="-1.5" y="-3.5" width="4.5" height="5" fill="#eee" stroke="#2a2a2a" stroke-width="1"/><rect x="-3.5" y="-1.5" width="4.5" height="5" fill="#f6f6f6" stroke="#2a2a2a" stroke-width="1.1"/></g>
<g transform="translate(158,20)"><path d="M-2.5,-3L2.5,3M2.5,-3L-2.5,3" stroke="#444" stroke-width="1"/><circle cx="-2.5" cy="3" r="1" fill="none" stroke="#444" stroke-width="0.7"/><circle cx="2.5" cy="3" r="1" fill="none" stroke="#444" stroke-width="0.7"/></g>
<g transform="translate(171.9,20)"><rect x="-3" y="-2.5" width="6" height="6" rx="1" fill="#333"/><rect x="-1.5" y="-3.5" width="3" height="2" fill="#555"/><rect x="-1" y="-0.5" width="3" height="3.5" fill="#e8e8e8"/></g>
<g transform="translate(191.9,20)"><circle cx="-0.2" cy="-0.4" r="3.1" fill="#e4ecf4" stroke="#3a4048" stroke-width="0.9"/><rect x="-2" y="-1.8" width="3.6" height="2.4" fill="#fff" stroke="#999" stroke-width="0.4"/><path d="M2,2.1l1.6,1.4" stroke="#111" stroke-width="1.2"/></g>
<g transform="translate(205.6,20)"><circle cx="-0.2" cy="-0.4" r="3.1" fill="#e4ecf4" stroke="#3a4048" stroke-width="0.9"/><rect x="-1.8" y="-2" width="1.8" height="1.8" fill="#c8a020"/><rect x="0" y="0" width="1.8" height="1.8" fill="#e8b820"/><path d="M-2,0.5l1.5,1.5" stroke="#6aa0d8" stroke-width="0.8"/><path d="M2,2.1l1.6,1.4" stroke="#111" stroke-width="1.2"/></g>
<g transform="translate(220,20)"><circle cx="-0.2" cy="-0.4" r="3.1" fill="#e4ecf4" stroke="#3a4048" stroke-width="0.9"/><rect x="-1.5" y="-2.4" width="2.8" height="3.8" fill="#fff" stroke="#555" stroke-width="0.6"/><path d="M2,2.1l1.6,1.4" stroke="#111" stroke-width="1.2"/></g>
<g transform="translate(240,20)"><rect x="-3.8" y="-3.5" width="4.5" height="4" fill="#a8b8c8" stroke="#2a3038" stroke-width="0.8"/><rect x="-2.3" y="-1.8" width="5.8" height="6" fill="#dce8f4" stroke="#1a2028" stroke-width="0.9"/></g>
<g transform="translate(254,20)"><rect x="-3.8" y="-3.5" width="4.5" height="4" fill="#a8b8c8" stroke="#2a3038" stroke-width="0.8"/><rect x="-2.3" y="-1.8" width="5.8" height="6" fill="#dce8f4" stroke="#1a2028" stroke-width="0.9"/><path d="M-0.5,1.5h2.8v1.5h-2.8z" fill="#e0b000"/><path d="M-0.3,1.2l1.2,-1.5l1.3,1.5" fill="#222"/></g>
<g transform="translate(268,20)"><rect x="-3.8" y="-3.5" width="4.5" height="4" fill="#a8b8c8" stroke="#2a3038" stroke-width="0.8"/><rect x="-2.3" y="-1.8" width="5.8" height="6" fill="#dce8f4" stroke="#1a2028" stroke-width="0.9"/><path d="M-0.5,1.5h2.8v1.5h-2.8z" fill="#40b040"/><path d="M-0.3,1.2l1.2,-1.5l1.3,1.5" fill="#222"/></g>
<g transform="translate(288,20)"><path d="M-2,2L2,-2" stroke="#6890c0" stroke-width="3"/><path d="M-4,-4h1.5M-4,-4v1.5M4,-4h-1.5M4,-4v1.5M-4,4h1.5M-4,4v-1.5M4,4h-1.5M4,4v-1.5" stroke="#333" stroke-width="0.8"/></g>
<g transform="translate(302,20)"><path d="M-1,0L2,-2.5" stroke="#6890c0" stroke-width="2.5"/><rect x="-3" y="1" width="5" height="2" fill="#e0b000"/><path d="M-4,-4h1.5M-4,-4v1.5M4,-4h-1.5M4,-4v1.5M-4,4h1.5M-4,4v-1.5M4,4h-1.5M4,4v-1.5" stroke="#333" stroke-width="0.8"/></g>
<path d="M318.5,17.2L325.8,17.2L318.5,24.5Z" fill="#f8f8f8"/><rect x="317.8" y="17" width="1.5" height="7.8" fill="#111"/><rect x="317.8" y="16.5" width="8" height="1" fill="#444"/><path d="M319,24.3L325,18.7" stroke="#1a1a1a" stroke-width="1.5"/><circle cx="325.5" cy="18.6" r="1.1" fill="#f0a000"/>
<g transform="translate(335.6,20)"><path d="M-3.8,-3.8h7.6v2.2h-0.8l-0.6,-1h-1.8v6h1.2v0.9h-4.6v-0.9h1.2v-6h-1.8l-0.6,1h-0.8z" fill="#111"/></g>
<rect x="346.5" y="17.3" width="6.5" height="2.6" rx="0.8" fill="#e8e8e8" stroke="#333" stroke-width="0.7"/><rect x="346.3" y="19.8" width="7.5" height="3.8" rx="1" fill="#f6f6f6" stroke="#1a1a1a" stroke-width="0.9"/><path d="M346.5,21.5h7" stroke="#333" stroke-width="0.6"/>
<g transform="translate(363.8,20)"><rect x="-3.5" y="-3.5" width="7" height="7" fill="#f0f0f0" stroke="#333" stroke-width="0.9"/><rect x="-3" y="-3" width="6" height="1" fill="#6aa0d8"/><circle cx="0" cy="0.8" r="1.4" fill="none" stroke="#555" stroke-width="0.6"/></g>
<g transform="translate(378,20)"><path d="M-3.5,-4v8" stroke="#d04040" stroke-width="1"/><rect x="-2.5" y="-3" width="3" height="2" fill="#7aa8d8"/><rect x="-2.5" y="-0.5" width="5.5" height="2" fill="#7aa8d8"/><rect x="-2.5" y="2" width="4" height="1.8" fill="#7aa8d8"/></g>
<rect x="394.3" y="16.8" width="7" height="7" rx="1" fill="#d4d4d4" stroke="#b0b0b0" stroke-width="0.6"/><rect x="395.5" y="18" width="1.5" height="1.5" fill="#8a8a8a"/><rect x="398.6" y="18" width="1.5" height="1.5" fill="#8a8a8a"/><rect x="395.5" y="21.1" width="1.5" height="1.5" fill="#8a8a8a"/><rect x="398.6" y="21.1" width="1.5" height="1.5" fill="#8a8a8a"/>
<rect x="409.5" y="17" width="5" height="6.6" rx="0.9" fill="#f4f4f4" stroke="#111" stroke-width="1.1"/><rect x="411.2" y="18.5" width="1.6" height="3.6" fill="#999"/>
<rect x="12" y="38" width="6.5" height="3.3" fill="#8a8a8a"/><rect x="12" y="38" width="6.5" height="1" fill="#a0a0a0"/><path d="M13.8,41.3h3.4l-1.7,2.4z" fill="#555"/>
<rect x="29.5" y="38.5" width="6" height="6" fill="#f0f0f0"/><rect x="30" y="39.5" width="5" height="1" fill="#666"/><rect x="30" y="42.5" width="5" height="1" fill="#666"/><rect x="31" y="38.5" width="1" height="6" fill="#888"/><rect x="33.5" y="38.5" width="1" height="6" fill="#888"/><rect x="28.00" y="37.0" width="1" height="1" fill="#111"/><rect x="28.00" y="45.0" width="1" height="1" fill="#111"/><rect x="30.00" y="37.0" width="1" height="1" fill="#111"/><rect x="30.00" y="45.0" width="1" height="1" fill="#111"/><rect x="28.0" y="39.00" width="1" height="1" fill="#111"/><rect x="36.0" y="39.00" width="1" height="1" fill="#111"/><rect x="32.00" y="37.0" width="1" height="1" fill="#111"/><rect x="32.00" y="45.0" width="1" height="1" fill="#111"/><rect x="28.0" y="41.00" width="1" height="1" fill="#111"/><rect x="36.0" y="41.00" width="1" height="1" fill="#111"/><rect x="34.00" y="37.0" width="1" height="1" fill="#111"/><rect x="34.00" y="45.0" width="1" height="1" fill="#111"/><rect x="28.0" y="43.00" width="1" height="1" fill="#111"/><rect x="36.0" y="43.00" width="1" height="1" fill="#111"/><rect x="36.00" y="37.0" width="1" height="1" fill="#111"/><rect x="36.00" y="45.0" width="1" height="1" fill="#111"/>
<circle cx="50.5" cy="40" r="2.2" fill="#c4dcf4" stroke="#6a8ab0" stroke-width="0.4"/><path d="M46.5,42l2.5,-1.5l3.5,1.5v2h-6z" fill="#e0b818" stroke="#806010" stroke-width="0.4"/><rect x="45.00" y="37.0" width="1" height="1" fill="#e02020"/><rect x="45.00" y="45.0" width="1" height="1" fill="#e02020"/><rect x="47.00" y="37.0" width="1" height="1" fill="#e02020"/><rect x="47.00" y="45.0" width="1" height="1" fill="#e02020"/><rect x="45.0" y="39.00" width="1" height="1" fill="#e02020"/><rect x="53.0" y="39.00" width="1" height="1" fill="#e02020"/><rect x="49.00" y="37.0" width="1" height="1" fill="#e02020"/><rect x="49.00" y="45.0" width="1" height="1" fill="#e02020"/><rect x="45.0" y="41.00" width="1" height="1" fill="#e02020"/><rect x="53.0" y="41.00" width="1" height="1" fill="#e02020"/><rect x="51.00" y="37.0" width="1" height="1" fill="#e02020"/><rect x="51.00" y="45.0" width="1" height="1" fill="#e02020"/><rect x="45.0" y="43.00" width="1" height="1" fill="#e02020"/><rect x="53.0" y="43.00" width="1" height="1" fill="#e02020"/><rect x="53.00" y="37.0" width="1" height="1" fill="#e02020"/><rect x="53.00" y="45.0" width="1" height="1" fill="#e02020"/>
<g transform="translate(72.5,41)"><path d="M-1.8,-2.6A2.6,2.6 0 1 1 -2.3,1.2" stroke="#333" stroke-width="1.2" fill="none"/><path d="M-3.5,-3.6l2.8,0.2l-1.6,2.2z" fill="#333"/><circle cx="0.2" cy="0" r="0.7" fill="#333"/></g>
<g transform="translate(89.4,41)"><path d="M1.8,-2.6A2.6,2.6 0 1 0 2.3,1.2" stroke="#333" stroke-width="1.2" fill="none"/><path d="M3.5,-3.6l-2.8,0.2l1.6,2.2z" fill="#333"/><circle cx="-0.2" cy="0" r="0.7" fill="#333"/></g>
<g transform="translate(106.3,41)"><path d="M-5.5,0l3.5,-3.3v2h4v-2l3.5,3.3l-3.5,3.3v-2h-4v2z" fill="#f6a24e" stroke="#e07a22" stroke-width="0.6" stroke-linejoin="round"/><path d="M-4,-0.3h8" stroke="#ffd8a8" stroke-width="0.6"/></g>
<g transform="translate(123.8,41)"><path d="M0,-5.3l3.3,3.5h-2v4h2l-3.3,3.5l-3.3,-3.5h2v-4h-2z" fill="#f6a24e" stroke="#e07a22" stroke-width="0.6" stroke-linejoin="round"/><path d="M-0.3,-4v8" stroke="#ffd8a8" stroke-width="0.6"/></g>
<g shape-rendering="crispEdges"><rect x="143" y="37" width="1" height="5" fill="#222"/><path d="M141.5,41.5h4l-2,2.3z" fill="#222"/><rect x="145" y="37" width="5" height="1" fill="#333"/><rect x="145" y="39" width="5" height="1" fill="#333"/><rect x="145" y="41" width="5" height="1" fill="#333"/><rect x="142" y="43" width="9" height="1" fill="#c0a040"/><rect x="142" y="44" width="9" height="1" fill="#555"/><rect x="161" y="39" width="3" height="1" fill="#333"/><path d="M162.5,37.8l-2.3,1.7l2.3,1.7z" fill="#333"/><rect x="164" y="37" width="4" height="1" fill="#333"/><rect x="164" y="39" width="4" height="1" fill="#333"/><rect x="164" y="41" width="4" height="1" fill="#333"/><rect x="160" y="42" width="9" height="1" fill="#d0b040"/><rect x="160" y="43" width="9" height="1" fill="#777"/><rect x="163" y="45" width="5" height="1" fill="#444"/><rect x="176" y="37" width="6" height="1" fill="#8898a8"/><rect x="176" y="39" width="4" height="1" fill="#333"/><rect x="176" y="41" width="6" height="1" fill="#333"/><rect x="176" y="43" width="5" height="1" fill="#333"/><path d="M181,38.5h2.5v2.5M181.5,38.5l2,2" stroke="#222" stroke-width="0.9" fill="none"/><rect x="193" y="36" width="9" height="1" fill="#333"/><rect x="193" y="37" width="9" height="1" fill="#888"/><rect x="194" y="39" width="4" height="1" fill="#333"/><rect x="194" y="41" width="4" height="1" fill="#333"/><rect x="194" y="43" width="4" height="1" fill="#333"/><rect x="200" y="39" width="1" height="6" fill="#222"/><path d="M198.5,40l2,-2.3l2,2.3z" fill="#222"/></g>
<rect x="2.5" y="60.5" width="14.5" height="15" rx="2.5" fill="url(#selg)" stroke="#8a8a8a" stroke-width="1"/>
<defs><linearGradient id="selg" x1="0" y1="0" x2="0" y2="1"><stop offset="0" stop-color="#d8d8d8"/><stop offset="1" stop-color="#bcbcbc"/></linearGradient><linearGradient id="rectg" x1="0" y1="0" x2="1" y2="1"><stop offset="0" stop-color="#f0f6fc"/><stop offset="1" stop-color="#a8c0dc"/></linearGradient><linearGradient id="gradg" x1="0" y1="0" x2="1" y2="1"><stop offset="0" stop-color="#ffffff"/><stop offset="1" stop-color="#30b050"/></linearGradient><radialGradient id="circg" cx="0.45" cy="0.6" r="0.7"><stop offset="0" stop-color="#ffe8ec"/><stop offset="1" stop-color="#f4b0b8"/></radialGradient></defs>
<g transform="translate(9.5,68)"><path d="M-2,-5v9l2.2,-2l1.8,3.5l1.5,-0.8l-1.8,-3.3h3z" fill="#111" stroke="#fff" stroke-width="0.5"/></g>
<g transform="translate(9.5,84)"><path d="M-2.5,-4.6h6.5M-4.2,-2v6.5" stroke="#666" stroke-width="0.8"/><rect x="-4.2" y="-4.6" width="3.4" height="3.4" rx="0.6" fill="#4848f8" stroke="#2828c8" stroke-width="0.4"/><rect x="3.5" y="-6" width="2.6" height="2.6" rx="0.4" fill="#4848f8"/><rect x="-5.5" y="3.6" width="2.6" height="2.6" rx="0.4" fill="#4848f8"/><path d="M-0.5,-0.8L4.5,3.2L2.6,5z" fill="#111" stroke="#fff" stroke-width="0.3"/></g>
<g transform="translate(9.5,100)"><rect x="-5.5" y="1" width="11" height="4.5" fill="#b4b4b4"/><path d="M-5,1.5l3.5,-3.5c1,-2.5 2.5,-3.5 4,-3.5c1.8,0 2.5,1.5 1.5,2.5l-1.2,-0.8l-1,1.5l1.5,1v2.8z" fill="#8c8c8c"/><path d="M-4,0.5l3,-3" stroke="#555" stroke-width="0.9"/></g>
<g transform="translate(9.5,116)"><circle cx="-1" cy="-1.5" r="3.7" fill="#e4eef8" stroke="#333" stroke-width="1"/><path d="M1.8,1.5l3,3" stroke="#e8901a" stroke-width="2.4" stroke-linecap="round"/></g>
<g transform="translate(9.5,132)"><rect x="-4.5" y="-5" width="9.5" height="10" fill="url(#rectg)" stroke="#222" stroke-width="1"/></g>
<defs><linearGradient id="boxg" x1="0" y1="0" x2="1" y2="0"><stop offset="0" stop-color="#8a8ad0"/><stop offset="0.5" stop-color="#b8b8ec"/><stop offset="1" stop-color="#e4e4ff"/></linearGradient></defs><path d="M5.3,144L10.5,142.3L15.5,146L14,152.5L9.5,153.8L5.8,151.5Z" fill="url(#boxg)" stroke="#303040" stroke-width="0.6"/><path d="M6,150.5Q9.5,146.8 13.8,151.8L9.5,153.6L5.9,151.4Z" fill="#3c3c98"/>
<g transform="translate(9.8,163.7)"><circle cx="0" cy="0" r="4.3" fill="url(#circg)" stroke="#2a2a2a" stroke-width="0.7"/></g>
<path d="M4.3,176.8L7.3,174.3L10.8,175.3L10.5,179L6.5,180.2Z" fill="#f4ea7a" stroke="#222" stroke-width="0.8"/><path d="M12.00,177.50L13.12,180.26L16.09,180.47L13.81,182.39L14.53,185.28L12.00,183.70L9.47,185.28L10.19,182.39L7.91,180.47L10.88,180.26Z" fill="#f8ee60" stroke="#222" stroke-width="0.8"/>
<path d="M10.49,196.93L10.46,197.07L10.40,197.21L10.32,197.34L10.21,197.46L10.09,197.57L9.94,197.66L9.77,197.73L9.59,197.77L9.40,197.79L9.20,197.78L9.00,197.73L8.80,197.65L8.61,197.54L8.43,197.40L8.27,197.23L8.14,197.03L8.03,196.81L7.96,196.57L7.92,196.31L7.92,196.05L7.96,195.78L8.04,195.51L8.16,195.25L8.33,195.01L8.53,194.79L8.77,194.59L9.04,194.43L9.33,194.31L9.65,194.24L9.98,194.21L10.32,194.23L10.66,194.30L10.99,194.42L11.31,194.59L11.60,194.81L11.87,195.08L12.09,195.39L12.27,195.73L12.40,196.10L12.48,196.49L12.50,196.90L12.46,197.31L12.35,197.72L12.19,198.12L11.97,198.49L11.69,198.83L11.36,199.13L10.98,199.39L10.56,199.58L10.12,199.72L9.65,199.80L9.16,199.80L8.68,199.73L8.21,199.60L7.75,199.39L7.32,199.11L6.93,198.77L6.60,198.37L6.31,197.93L6.10,197.43L5.96,196.91L5.89,196.37L5.90,195.81L6.00,195.26L6.17,194.71L6.43,194.20L6.76,193.72L7.16,193.29L7.63,192.91L8.15,192.61L8.71,192.38L9.31,192.23L9.93,192.18L10.56,192.21L11.19,192.33L11.79,192.55L12.37,192.85L12.90,193.24L13.37,193.71L13.78,194.24L14.10,194.84L14.34,195.48L14.49,196.16L14.54,196.85L14.48,197.56L14.32,198.25L14.06,198.92L13.71,199.55L13.26,200.13L12.73,200.64L12.12,201.08L11.45,201.42L10.73,201.67L9.98,201.81L9.21,201.84L8.43,201.76L7.67,201.57L6.94,201.26L6.25,200.85L5.63,200.34" fill="none" stroke="#1a1a1a" stroke-width="0.95"/>
<defs><linearGradient id="pencg" x1="0" y1="0" x2="1" y2="0"><stop offset="0" stop-color="#ffffff"/><stop offset="0.5" stop-color="#f4c030"/><stop offset="1" stop-color="#e08a10"/></linearGradient></defs><path d="M9.3,214.3L12.6,207.6L15.2,209L11.8,215.8Z" fill="url(#pencg)" stroke="#333" stroke-width="0.5"/><path d="M9.3,214.3L11.8,215.8L8.6,217.6Z" fill="#151515"/><path d="M6,207.5l-1.2,2.5M5.5,211.5l-0.8,1.6" stroke="#666" stroke-width="0.6"/>
<path d="M5,222.5C6.5,224.5 8,226.5 8.3,230" fill="none" stroke="#222" stroke-width="0.7"/><path d="M9.5,228.5L13.3,223.2C14,222.3 15.5,222.8 15.5,224L12,229.8Z" fill="#6aaae0" stroke="#2a4a70" stroke-width="0.5"/><path d="M10.8,227.8l1.8,1l-0.8,1z" fill="#e8b020"/><path d="M5,232.8h5" stroke="#111" stroke-width="1.3"/><path d="M10,232.8l1.5,-2.5" stroke="#222" stroke-width="0.7"/>
<path d="M5.5,237.5C3.5,240.5 3.8,246 6.2,249.8L8.2,249.8C6.3,246.5 6.2,241.5 7.8,238.2Z" fill="#111"/><path d="M9.8,246.5L12.5,240.5L14.8,241.5L12,247.5Z" fill="#f0c030" stroke="#333" stroke-width="0.5"/><path d="M12.5,240.5l0.8,-1.6l1.8,0.9l-0.3,1.7z" fill="#3070c0"/><path d="M11.6,240.7l0.9,-0.6l0.4,0.8z" fill="#d02020"/><path d="M8.5,248.8h6" stroke="#333" stroke-width="0.7"/>
<path d="M4.2,264.5L8,254.5H10.6L14.3,264.5H11.7L11,262.3H7.4L6.7,264.5ZM8,260.3H10.4L9.2,256.8Z" fill="#0a0a0a"/><rect x="14.3" y="254" width="1.3" height="11" fill="#f4f4f4"/>
<defs><linearGradient id="sprg" x1="0" y1="0" x2="1" y2="1"><stop offset="0" stop-color="#90e870"/><stop offset="1" stop-color="#1a7a1a"/></linearGradient><linearGradient id="bktg" x1="0" y1="0" x2="1" y2="1"><stop offset="0" stop-color="#a8d4f0"/><stop offset="1" stop-color="#2a6aa0"/></linearGradient></defs><path d="M10,276.5Q10,274.5 12,274.3L13.8,274.6Q16,276 16.2,279Q16,282.3 13.3,282.3Q10.2,281.5 10,278.5Z" fill="url(#sprg)" stroke="#1a4a1a" stroke-width="0.4"/><rect x="10.8" y="273.3" width="3" height="1.3" rx="0.4" fill="#222"/><rect x="11.3" y="274.3" width="2" height="0.7" fill="#f0c020"/><circle cx="5.6" cy="271.6" r="0.55" fill="#222"/><circle cx="7" cy="273.2" r="0.55" fill="#222"/><circle cx="5.2" cy="275.3" r="0.55" fill="#222"/><circle cx="6.8" cy="276.3" r="0.55" fill="#333"/>
<g transform="translate(9.5,292)"><path d="M-4.5,3l5.5,-8l4,3l-5.5,8z" fill="#f4c4b4" stroke="#777" stroke-width="0.6"/></g>
<path d="M8.5,305.5L12.3,302.3L16,305L15.3,309.3L10.5,310.8Z" fill="url(#bktg)" stroke="#1a3a5a" stroke-width="0.5"/><path d="M8.5,305.5L12.3,302.3L13,304.5Z" fill="#1a1a1a"/><rect x="6.6" y="305.5" width="1.6" height="5.5" fill="#30a040"/><ellipse cx="9.5" cy="313.2" rx="5" ry="0.9" fill="#50b860"/>
<g transform="translate(9.5,324)"><rect x="-5" y="-5.5" width="10.5" height="11" fill="url(#gradg)" stroke="#8ac08a" stroke-width="0.5"/><path d="M-3,-3l5.5,5" stroke="#333" stroke-width="0.6"/><rect x="-3.8" y="-3.8" width="1.6" height="1.6" fill="#fff" stroke="#333" stroke-width="0.4"/><circle cx="2.8" cy="2.3" r="1" fill="#fff" stroke="#333" stroke-width="0.4"/></g>
<g transform="translate(9.5,340)"><path d="M-4,5l6,-6" stroke="#5588aa" stroke-width="1.2"/><path d="M0,-1.5l3,-3c0.8,-0.8 2,-0.8 2.5,0c0.5,0.5 0.5,1.6 -0.3,2.3l-3,3z" fill="#111"/><circle cx="-4" cy="5" r="0.8" fill="#3a70a0"/></g>
<g transform="translate(9.5,356)"><rect x="-2" y="-5.5" width="4" height="3.5" fill="#a8c8e8" stroke="#333" stroke-width="0.5"/><rect x="-5.5" y="1.5" width="4" height="3.5" fill="#a8c8e8" stroke="#333" stroke-width="0.5"/><rect x="1.5" y="1.5" width="4" height="3.5" fill="#a8c8e8" stroke="#333" stroke-width="0.5"/><path d="M0,-2v2M-3.5,1.5v-1.5h7v1.5" fill="none" stroke="#333" stroke-width="0.6"/><rect x="-1.5" y="-1" width="3" height="1.5" fill="#f0c020"/></g>
<rect x="8" y="55" width="1" height="1" fill="#aaa"/><rect x="11" y="55" width="1" height="1" fill="#aaa"/>
<rect x="2" y="18" width="1" height="1" fill="#bbb"/><rect x="2" y="22" width="1" height="1" fill="#bbb"/><rect x="2" y="38" width="1" height="1" fill="#bbb"/><rect x="2" y="42" width="1" height="1" fill="#bbb"/>
<path d="M401,58h5l-2.5,3z" fill="#111"/>
<g transform="translate(631,57.5)"><circle cx="-0.8" cy="-0.8" r="1.8" fill="none" stroke="#333" stroke-width="0.8"/><path d="M0.5,0.5l2,2" stroke="#333" stroke-width="1"/></g>
</svg>
<span class="ab" style="left:216px;top:37px;font-size:6px;line-height:8px;color:#3c3c3c;white-space:nowrap;">X</span>
<div class="ab" style="left:222.5px;top:36px;width:26.0px;height:10.5px;background:#fff;border:1px solid #a9a9a9;border-radius:2px;font-size:6px;line-height:8.5px;padding-left:1.5px;color:#222;white-space:nowrap;overflow:hidden">181.987</div>
<div class="ab" style="left:247.5px;top:36px;width:6.5px;height:10.5px;border:1px solid #b4b4b4;border-left:1px solid #e4e4e4;border-radius:0 2px 2px 0;background:linear-gradient(#fbfbfb,#ececec)"></div>
<svg style="left:0;top:0" width="1" height="1"><path d="M249.75,40.45l1.5,-2.2l1.5,2.2zM249.75,42.05l1.5,2.2l1.5,-2.2z" fill="#444"/></svg>
<span class="ab" style="left:258.5px;top:37px;font-size:6px;line-height:8px;color:#3c3c3c;white-space:nowrap;">Y</span>
<div class="ab" style="left:265px;top:36px;width:26px;height:10.5px;background:#fff;border:1px solid #a9a9a9;border-radius:2px;font-size:6px;line-height:8.5px;padding-left:1.5px;color:#222;white-space:nowrap;overflow:hidden">591.048</div>
<div class="ab" style="left:290px;top:36px;width:7px;height:10.5px;border:1px solid #b4b4b4;border-left:1px solid #e4e4e4;border-radius:0 2px 2px 0;background:linear-gradient(#fbfbfb,#ececec)"></div>
<svg style="left:0;top:0" width="1" height="1"><path d="M292.5,40.45l1.5,-2.2l1.5,2.2zM292.5,42.05l1.5,2.2l1.5,-2.2z" fill="#444"/></svg>
<span class="ab" style="left:302px;top:37px;font-size:6px;line-height:8px;color:#3c3c3c;white-space:nowrap;">W</span>
<div class="ab" style="left:310.5px;top:36px;width:26.5px;height:10.5px;background:#fff;border:1px solid #a9a9a9;border-radius:2px;font-size:6px;line-height:8.5px;padding-left:1.5px;color:#222;white-space:nowrap;overflow:hidden">1656.55</div>
<div class="ab" style="left:336px;top:36px;width:7px;height:10.5px;border:1px solid #b4b4b4;border-left:1px solid #e4e4e4;border-radius:0 2px 2px 0;background:linear-gradient(#fbfbfb,#ececec)"></div>
<svg style="left:0;top:0" width="1" height="1"><path d="M338.5,40.45l1.5,-2.2l1.5,2.2zM338.5,42.05l1.5,2.2l1.5,-2.2z" fill="#444"/></svg>
<span class="ab" style="left:364px;top:37px;font-size:6px;line-height:8px;color:#3c3c3c;white-space:nowrap;">H</span>
<div class="ab" style="left:371px;top:36px;width:26px;height:10.5px;background:#fff;border:1px solid #a9a9a9;border-radius:2px;font-size:6px;line-height:8.5px;padding-left:1.5px;color:#222;white-space:nowrap;overflow:hidden">1072.79</div>
<div class="ab" style="left:396px;top:36px;width:6.5px;height:10.5px;border:1px solid #b4b4b4;border-left:1px solid #e4e4e4;border-radius:0 2px 2px 0;background:linear-gradient(#fbfbfb,#ececec)"></div>
<svg style="left:0;top:0" width="1" height="1"><path d="M398.25,40.45l1.5,-2.2l1.5,2.2zM398.25,42.05l1.5,2.2l1.5,-2.2z" fill="#444"/></svg>
<svg style="left:0;top:0" width="1" height="1"><path d="M350.2,40.8v-1.1a1.4,1.4 0 0 1 2.8,0v1.1" fill="none" stroke="#444" stroke-width="0.8"/><rect x="349.3" y="40.8" width="4.6" height="3.3" fill="#f0e4a0" stroke="#5a5a4a" stroke-width="0.6"/></svg>
<div class="ab" style="left:404.5px;top:35.5px;width:24px;height:12px;background:linear-gradient(#fafafa,#e8e8e8);border:1px solid #b0b0b0;border-radius:2px"></div>
<span class="ab" style="left:407px;top:37px;font-size:6.5px;line-height:8.5px;color:#333;white-space:nowrap;">px</span>
<svg style="left:0;top:0" width="1" height="1"><path d="M420.5,39.5h4l-2,3z" fill="#333"/></svg>
<span class="ab" style="left:438.5px;top:36.8px;font-size:6.2px;line-height:8.2px;color:#1e1e1e;white-space:nowrap;">Affect:</span>
<div class="ab" style="left:461px;top:31.7px;width:16px;height:18.5px;background:linear-gradient(#c4c4c4,#cdcdcd 60%,#d6d6d6);border:1px solid #8a8a8a;border-radius:2.5px;box-shadow:inset 1px 1px 1.5px rgba(0,0,0,0.18)"></div>
<div class="ab" style="left:478.5px;top:31.7px;width:15.5px;height:18.5px;background:linear-gradient(#c4c4c4,#cdcdcd 60%,#d6d6d6);border:1px solid #8a8a8a;border-radius:2.5px;box-shadow:inset 1px 1px 1.5px rgba(0,0,0,0.18)"></div>
<div class="ab" style="left:495.5px;top:31.7px;width:15.0px;height:18.5px;background:linear-gradient(#c4c4c4,#cdcdcd 60%,#d6d6d6);border:1px solid #8a8a8a;border-radius:2.5px;box-shadow:inset 1px 1px 1.5px rgba(0,0,0,0.18)"></div>
<div class="ab" style="left:512.5px;top:31.7px;width:15.0px;height:18.5px;background:linear-gradient(#c4c4c4,#cdcdcd 60%,#d6d6d6);border:1px solid #8a8a8a;border-radius:2.5px;box-shadow:inset 1px 1px 1.5px rgba(0,0,0,0.18)"></div>
<svg style="left:0;top:0" width="1" height="1"><rect x="466.5" y="38.3" width="6" height="1.8" fill="#333"/><path d="M471,40.3q1.3,0.6 0.8,1.8" stroke="#222" stroke-width="0.9" fill="none"/><rect x="467" y="42.7" width="3.5" height="0.8" fill="#555"/><path d="M470.5,42l2.2,1.2l-2.2,1.2z" fill="#111"/><rect x="483" y="38.3" width="4.5" height="0.8" fill="#444"/><rect x="483" y="40" width="4" height="0.8" fill="#444"/><path d="M487.2,38.5q2,1.3 1,3.5" stroke="#222" stroke-width="0.8" fill="none"/><rect x="484" y="42.7" width="3.5" height="0.8" fill="#555"/><path d="M487.5,42l2.2,1.2l-2.2,1.2z" fill="#111"/><rect x="500" y="38.3" width="6.5" height="2.4" fill="#7ab0e0"/><rect x="500" y="38.3" width="6.5" height="0.8" fill="#c8e0f8"/><rect x="505.6" y="38.3" width="0.9" height="3" fill="#333"/><rect x="501" y="42.7" width="3.5" height="0.8" fill="#555"/><path d="M504.5,42l2.2,1.2l-2.2,1.2z" fill="#111"/><rect x="517" y="38.3" width="1.3" height="2.6" fill="#222"/><rect x="516.5" y="39" width="2.3" height="0.8" fill="#222"/><rect x="520" y="38.3" width="2.8" height="0.9" fill="#222"/><rect x="521.8" y="38.3" width="1" height="2.6" fill="#222"/><rect x="519.8" y="40.3" width="2" height="0.8" fill="#333"/><rect x="518" y="42.7" width="3.5" height="0.8" fill="#555"/><path d="M521.5,42l2.2,1.2l-2.2,1.2z" fill="#111"/></svg>
<div class="ab" style="left:626px;top:63px;width:9px;height:397px;background:linear-gradient(90deg,#e6e6e6,#fafafa 40%,#f0f0f0);border-left:1px solid #c8c8c8;border-right:1px solid #c4c4c4"></div>
<div class="ab" style="left:627px;top:245px;width:7px;height:13.5px;background:linear-gradient(90deg,#f4f4f4,#dedede);border:1px solid #8e8e8e;border-radius:3px"></div>
<svg style="left:0;top:0" width="1" height="1"><path d="M629,451h4l-2,-3z M629,454.5h4l-2,3z" fill="#555"/></svg>
<div class="ab" style="left:635px;top:61px;width:5px;height:409px;background:#d6d6d6;border-left:1px solid #e8e8e8"></div>
<div class="ab" style="left:28px;top:460px;width:598px;height:8.5px;background:linear-gradient(#e8e8e8,#fbfbfb 40%,#f0f0f0);border-bottom:1px solid #c4c4c4"></div>
<div class="ab" style="left:240px;top:461px;width:21.5px;height:6.5px;background:linear-gradient(#f6f6f6,#dcdcdc);border:1px solid #8e8e8e;border-radius:3px"></div>
<svg style="left:0;top:0" width="1" height="1"><path d="M616.5,463v4l-3,-2z M620,463v4l3,-2z" fill="#555"/><path d="M628.5,462v6l4,-3z" fill="#e4e4e4" stroke="#b8b8b8" stroke-width="0.6"/></svg>
<div class="ab" style="left:0;top:468.5px;width:640px;height:1.5px;background:#d0d0d0"></div>
<svg style="left:0;top:0" width="640" height="500">
<rect x="-2" y="470" width="8" height="8.5" fill="#808080"/>
<rect x="6" y="470" width="8" height="8.5" fill="#999999"/>
<rect x="14" y="470" width="8" height="8.5" fill="#b3b3b3"/>
<rect x="22" y="470" width="8" height="8.5" fill="#cccccc"/>
<rect x="30" y="470" width="8" height="8.5" fill="#e6e6e6"/>
<rect x="38" y="470" width="8" height="8.5" fill="#ececec"/>
<rect x="46" y="470" width="8" height="8.5" fill="#f2f2f2"/>
<rect x="54" y="470" width="8" height="8.5" fill="#f9f9f9"/>
<rect x="62" y="470" width="8" height="8.5" fill="#ffffff"/>
<rect x="70" y="470" width="8" height="8.5" fill="#800000"/>
<rect x="78" y="470" width="8" height="8.5" fill="#ff0000"/>
<rect x="86" y="470" width="8" height="8.5" fill="#808000"/>
<rect x="94" y="470" width="8" height="8.5" fill="#ffff00"/>
<rect x="102" y="470" width="8" height="8.5" fill="#008000"/>
<rect x="110" y="470" width="8" height="8.5" fill="#00ff00"/>
<rect x="118" y="470" width="8" height="8.5" fill="#008080"/>
<rect x="126" y="470" width="8" height="8.5" fill="#00ffff"/>
<rect x="134" y="470" width="8" height="8.5" fill="#000080"/>
<rect x="142" y="470" width="8" height="8.5" fill="#0000ff"/>
<rect x="150" y="470" width="8" height="8.5" fill="#800080"/>
<rect x="158" y="470" width="8" height="8.5" fill="#ff00ff"/>
<rect x="166" y="470" width="8" height="8.5" fill="#2b0000"/>
<rect x="174" y="470" width="8" height="8.5" fill="#550000"/>
<rect x="182" y="470" width="8" height="8.5" fill="#800000"/>
<rect x="190" y="470" width="8" height="8.5" fill="#aa0000"/>
<rect x="198" y="470" width="8" height="8.5" fill="#d40000"/>
<rect x="206" y="470" width="8" height="8.5" fill="#ff0000"/>
<rect x="214" y="470" width="8" height="8.5" fill="#ff2a2a"/>
<rect x="222" y="470" width="8" height="8.5" fill="#ff5555"/>
<rect x="230" y="470" width="8" height="8.5" fill="#ff8080"/>
<rect x="238" y="470" width="8" height="8.5" fill="#ffaaaa"/>
<rect x="246" y="470" width="8" height="8.5" fill="#ffd5d5"/>
<rect x="254" y="470" width="8" height="8.5" fill="#280b0b"/>
<rect x="262" y="470" width="8" height="8.5" fill="#501616"/>
<rect x="270" y="470" width="8" height="8.5" fill="#782121"/>
<rect x="278" y="470" width="8" height="8.5" fill="#a02c2c"/>
<rect x="286" y="470" width="8" height="8.5" fill="#c83737"/>
<rect x="294" y="470" width="8" height="8.5" fill="#d35f5f"/>
<rect x="302" y="470" width="8" height="8.5" fill="#de8787"/>
<rect x="310" y="470" width="8" height="8.5" fill="#e9afaf"/>
<rect x="318" y="470" width="8" height="8.5" fill="#f4d7d7"/>
<rect x="326" y="470" width="8" height="8.5" fill="#241c1c"/>
<rect x="334" y="470" width="8" height="8.5" fill="#483737"/>
<rect x="342" y="470" width="8" height="8.5" fill="#6c5353"/>
<rect x="350" y="470" width="8" height="8.5" fill="#916f6f"/>
<rect x="358" y="470" width="8" height="8.5" fill="#ac9393"/>
<rect x="366" y="470" width="8" height="8.5" fill="#c8b7b7"/>
<rect x="374" y="470" width="8" height="8.5" fill="#e3dbdb"/>
<rect x="382" y="470" width="8" height="8.5" fill="#2b1100"/>
<rect x="390" y="470" width="8" height="8.5" fill="#552200"/>
<rect x="398" y="470" width="8" height="8.5" fill="#803300"/>
<rect x="406" y="470" width="8" height="8.5" fill="#aa4400"/>
<rect x="414" y="470" width="8" height="8.5" fill="#d45500"/>
<rect x="422" y="470" width="8" height="8.5" fill="#ff6600"/>
<rect x="430" y="470" width="8" height="8.5" fill="#ff7f2a"/>
<rect x="438" y="470" width="8" height="8.5" fill="#ff9955"/>
<rect x="446" y="470" width="8" height="8.5" fill="#ffb380"/>
<rect x="454" y="470" width="8" height="8.5" fill="#ffccaa"/>
<rect x="462" y="470" width="8" height="8.5" fill="#ffe6d5"/>
<rect x="470" y="470" width="8" height="8.5" fill="#28170b"/>
<rect x="478" y="470" width="8" height="8.5" fill="#502d16"/>
<rect x="486" y="470" width="8" height="8.5" fill="#784421"/>
<rect x="494" y="470" width="8" height="8.5" fill="#a05a2c"/>
<rect x="502" y="470" width="8" height="8.5" fill="#c87137"/>
<rect x="510" y="470" width="8" height="8.5" fill="#d38d5f"/>
<rect x="518" y="470" width="8" height="8.5" fill="#deaa87"/>
<rect x="526" y="470" width="8" height="8.5" fill="#e9c6af"/>
<rect x="534" y="470" width="8" height="8.5" fill="#f4e3d7"/>
<rect x="542" y="470" width="8" height="8.5" fill="#241f1c"/>
<rect x="550" y="470" width="8" height="8.5" fill="#483e37"/>
<rect x="558" y="470" width="8" height="8.5" fill="#6c5d53"/>
<rect x="566" y="470" width="8" height="8.5" fill="#917c6f"/>
<rect x="574" y="470" width="8" height="8.5" fill="#ac9d93"/>
<rect x="582" y="470" width="8" height="8.5" fill="#c8beb7"/>
<rect x="590" y="470" width="8" height="8.5" fill="#e3dedb"/>
<rect x="598" y="470" width="8" height="8.5" fill="#2b2200"/>
<rect x="606" y="470" width="8" height="8.5" fill="#554400"/>
<rect x="614" y="470" width="8" height="8.5" fill="#806600"/>
<rect x="622" y="470" width="8" height="8.5" fill="#aa8800"/>
<rect x="630" y="470" width="3.5" height="8.5" fill="#d4aa00"/>
<path d="M639.5,471.5v5l-3.5,-2.5z" fill="#777"/>
</svg>
<div class="ab" style="left:0;top:478.5px;width:633px;height:8px;background:linear-gradient(#f4f4f4,#fdfdfd 50%,#eeeeee);border-bottom:1px solid #c8c8c8;border-right:1px solid #c8c8c8"></div>
<div class="ab" style="left:10px;top:479.5px;width:113px;height:6.5px;background:linear-gradient(#f0f0f0,#d8d8d8);border:1px solid #9a9a9a;border-radius:3.5px"></div>
<svg style="left:0;top:0" width="1" height="1"><path d="M625,481.5v4l-3,-2z M628.5,481.5v4l3,-2z" fill="#555"/></svg>
<span class="ab" style="left:0.8px;top:487.3px;font-size:6.5px;line-height:8.5px;color:#333;white-space:nowrap;">Fill:</span>
<span class="ab" style="left:34.5px;top:487.3px;font-size:6.5px;line-height:8.5px;color:#333;white-space:nowrap;">None</span>
<span class="ab" style="left:1px;top:492.5px;font-size:6.5px;line-height:8.5px;color:#333;white-space:nowrap;">Stroke:</span>
<div class="ab" style="left:23px;top:493px;width:26px;height:7px;background:#008000"></div>
<span class="ab" style="left:51px;top:492px;font-size:7px;line-height:9px;color:#333;white-space:nowrap;">200</span>
<span class="ab" style="left:63px;top:489.3px;font-size:6.5px;line-height:8.5px;color:#333;white-space:nowrap;">O:</span>
<div class="ab" style="left:70.5px;top:488.5px;width:14.5px;height:11.0px;background:#fff;border:1px solid #a9a9a9;border-radius:2px;font-size:6px;line-height:9.0px;padding-left:1.5px;color:#222;white-space:nowrap;overflow:hidden"><span style="padding-left:1.5px">100</span></div>
<div class="ab" style="left:84px;top:488.5px;width:4.5px;height:11.0px;border:1px solid #b4b4b4;border-left:1px solid #e4e4e4;border-radius:0 2px 2px 0;background:linear-gradient(#fbfbfb,#ececec)"></div>
<svg style="left:0;top:0" width="1" height="1"><path d="M85.25,493.2l1.5,-2.2l1.5,2.2zM85.25,494.8l1.5,2.2l1.5,-2.2z" fill="#444"/></svg>
<svg style="left:0;top:0" width="1" height="1"><ellipse cx="95.5" cy="493.3" rx="2.4" ry="1.5" fill="#333"/><path d="M92.5,491.3l1,1M98.5,491.3l-1,1M95.5,490.3v1.3M92.5,495.3l1,-1M98.5,495.3l-1,-1M95.5,496.3v-1.3" stroke="#333" stroke-width="0.7"/><circle cx="95.5" cy="493.3" r="0.6" fill="#ddd"/><path d="M104.5,493v-1.5a1.6,1.6 0 0 1 3.2,0v1.5" fill="none" stroke="#555" stroke-width="0.8"/><rect x="104" y="493" width="4.3" height="3.5" fill="#f4eab0" stroke="#555" stroke-width="0.5"/></svg>
<div class="ab" style="left:113px;top:488px;width:62px;height:12.5px;background:linear-gradient(#fcfcfc,#ececec);border:1px solid #b0b0b0;border-radius:2px"></div>
<span class="ab" style="left:115.5px;top:489.3px;font-size:6.2px;line-height:8.2px;color:#111;white-space:nowrap;font-weight:bold;letter-spacing:-0.25px">&bull;TGC_vectorised</span>
<svg style="left:0;top:0" width="1" height="1"><path d="M167.5,492h4l-2,3z" fill="#333"/></svg>
<span class="ab" style="left:178.5px;top:489px;font-size:6.8px;line-height:8.8px;color:#222;white-space:nowrap;"><b>Arc</b> in layer <b>TGC_vectorised</b>. Click selection to toggle scale/rotation handles.</span>
<span class="ab" style="left:564px;top:485.3px;font-size:6px;line-height:8px;color:#333;white-space:nowrap;">X:</span>
<span class="ab" style="left:573.5px;top:485.3px;font-size:6px;line-height:8px;color:#333;white-space:nowrap;">319.64</span>
<span class="ab" style="left:564px;top:492px;font-size:6px;line-height:8px;color:#333;white-space:nowrap;">Y:</span>
<span class="ab" style="left:570.5px;top:492px;font-size:6px;line-height:8px;color:#333;white-space:nowrap;">1445.04</span>
<span class="ab" style="left:596px;top:488.5px;font-size:6.5px;line-height:8.5px;color:#333;white-space:nowrap;">Z:</span>
<div class="ab" style="left:602.5px;top:487.5px;width:21.5px;height:11.0px;background:#fff;border:1px solid #a9a9a9;border-radius:2px;font-size:6px;line-height:9.0px;padding-left:1.5px;color:#222;white-space:nowrap;overflow:hidden">504%</div>
<div class="ab" style="left:623px;top:487.5px;width:6px;height:11.0px;border:1px solid #b4b4b4;border-left:1px solid #e4e4e4;border-radius:0 2px 2px 0;background:linear-gradient(#fbfbfb,#ececec)"></div>
<svg style="left:0;top:0" width="1" height="1"><path d="M625.0,492.2l1.5,-2.2l1.5,2.2zM625.0,493.8l1.5,2.2l1.5,-2.2z" fill="#444"/></svg>
</body></html>
